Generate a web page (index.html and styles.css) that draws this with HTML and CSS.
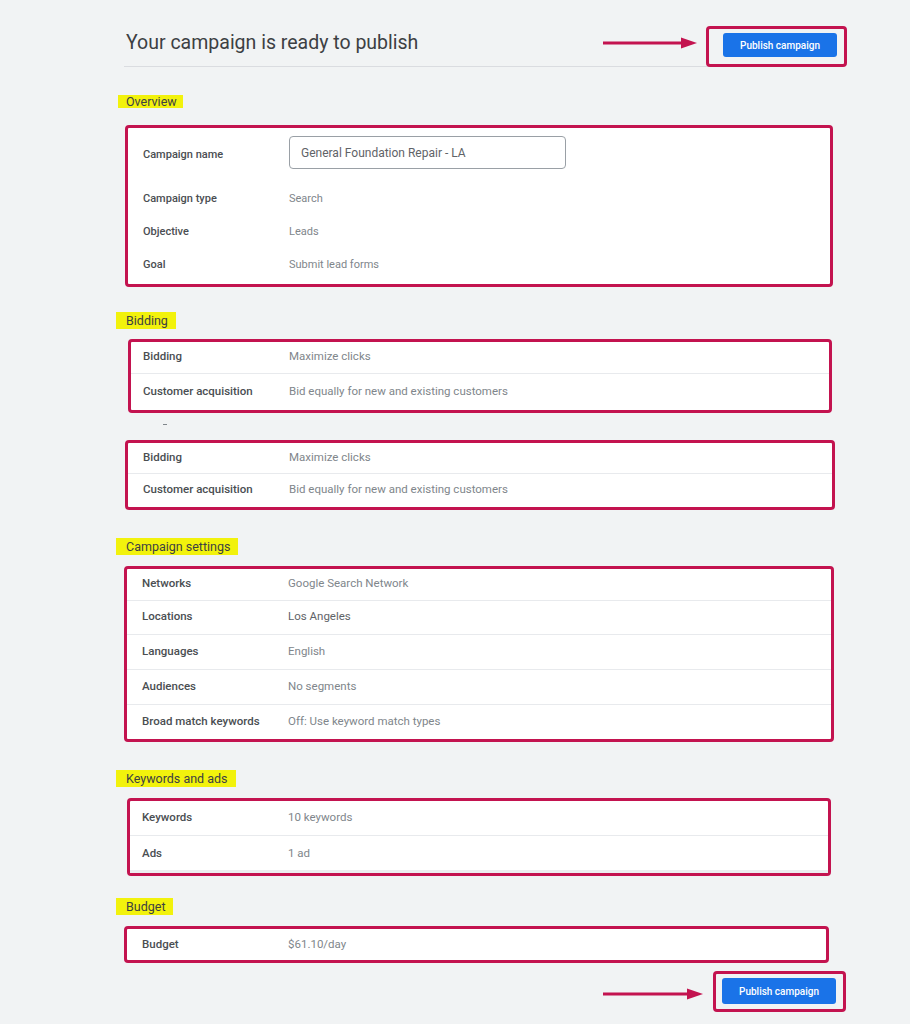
FILE: index.html
```html
<!DOCTYPE html>
<html lang="en">
<head>
<meta charset="utf-8">
<title>Your campaign is ready to publish</title>
<link rel="stylesheet" href="styles.css">
</head>
<body>
<main class="page">
  <header class="header">
    <h1 class="title">Your campaign is ready to publish</h1>
    <div class="callout callout--top">
      <svg class="arrow" width="94" height="12" viewBox="0 0 94 12"><line x1="0" y1="6" x2="82" y2="6" stroke="#c3134f" stroke-width="3"/><polygon points="78,0.5 94,6 78,11.5" fill="#c3134f"/></svg>
      <div class="mark mark--top"><button class="publish">Publish campaign</button></div>
    </div>
  </header>

  <section class="section section--overview">
    <h2 class="heading"><span class="hl hl--small">Overview</span></h2>
    <div class="card card--overview">
      <div class="row row--name">
        <div class="label">Campaign name</div>
        <div class="input">General Foundation Repair - LA</div>
      </div>
      <div class="row row--plain"><div class="label">Campaign type</div><div class="value">Search</div></div>
      <div class="row row--plain"><div class="label">Objective</div><div class="value">Leads</div></div>
      <div class="row row--plain"><div class="label">Goal</div><div class="value">Submit lead forms</div></div>
    </div>
  </section>

  <section class="section section--bidding">
    <h2 class="heading"><span class="hl">Bidding</span></h2>
    <div class="card card--bid1">
      <div class="row row--line row--first"><div class="label">Bidding</div><div class="value">Maximize clicks</div></div>
      <div class="row row--second"><div class="label">Customer acquisition</div><div class="value">Bid equally for new and existing customers</div></div>
    </div>
    <div class="dash"></div>
    <div class="card card--bid2">
      <div class="row row--line row--first"><div class="label">Bidding</div><div class="value">Maximize clicks</div></div>
      <div class="row row--second"><div class="label">Customer acquisition</div><div class="value">Bid equally for new and existing customers</div></div>
    </div>
  </section>

  <section class="section section--settings">
    <h2 class="heading"><span class="hl">Campaign settings</span></h2>
    <div class="card card--settings">
      <div class="row row--line row--first"><div class="label">Networks</div><div class="value">Google Search Network</div></div>
      <div class="row row--line"><div class="label">Locations</div><div class="value value--dark">Los Angeles</div></div>
      <div class="row row--line row--wide"><div class="label">Languages</div><div class="value">English</div></div>
      <div class="row row--line row--wide"><div class="label">Audiences</div><div class="value">No segments</div></div>
      <div class="row"><div class="label">Broad match keywords</div><div class="value">Off: Use keyword match types</div></div>
    </div>
  </section>

  <section class="section section--keywords">
    <h2 class="heading"><span class="hl">Keywords and ads</span></h2>
    <div class="card card--keywords">
      <div class="row row--line row--tall"><div class="label">Keywords</div><div class="value">10 keywords</div></div>
      <div class="row row--tall row--last"><div class="label">Ads</div><div class="value">1 ad</div></div>
    </div>
  </section>

  <section class="section section--budget">
    <h2 class="heading"><span class="hl">Budget</span></h2>
    <div class="card card--budget">
      <div class="row row--budget"><div class="label">Budget</div><div class="value">$61.10/day</div></div>
    </div>
  </section>

  <footer class="footer">
    <svg class="arrow arrow--bottom" width="100" height="12" viewBox="0 0 100 12"><line x1="0" y1="6" x2="88" y2="6" stroke="#c3134f" stroke-width="3"/><polygon points="84,0.5 100,6 84,11.5" fill="#c3134f"/></svg>
    <div class="mark mark--bottom"><button class="publish publish--bottom">Publish campaign</button></div>
  </footer>
</main>
</body>
</html>
```
FILE: styles.css
```css
* { box-sizing: border-box; }
html, body { margin: 0; padding: 0; }
body {
  background: #f1f3f4;
  font-family: Roboto, "Liberation Sans", Arial, sans-serif;
  color: #3c4043;
}
.page {
  margin-left: 124px;
  width: 711px;
}
.header {
  display: flex;
  align-items: flex-start;
  padding-top: 26px;
  border-bottom: 1px solid #dadce0;
  height: 67px;
}
.title {
  flex: 1;
  margin: 0;
  padding: 6px 0 0 2px;
  font-size: 19.5px;
  line-height: 22px;
  font-weight: 400;
  color: #3c4043;
}
.callout {
  display: flex;
  align-items: flex-start;
  margin-right: -12px;
}
.arrow { display: block; }
.callout--top .arrow { margin-top: 11px; margin-right: 9px; }
.mark {
  border: 3px solid #c3134f;
  border-radius: 4px;
}
.mark--top { padding: 4px 7px 7px 14px; height: 41px; }
.publish {
  display: block;
  width: 114px;
  height: 24px;
  border: 0;
  border-radius: 3px;
  background: #1a73e8;
  color: #fff;
  font-family: Roboto, "Liberation Sans", Arial, sans-serif;
  font-size: 10px;
  font-weight: 500;
  padding: 0;
  cursor: pointer;
}
.publish--bottom { height: 26px; }

.heading {
  margin: 0;
  font-size: 12.5px;
  font-weight: 400;
  line-height: 17px;
  height: 17px;
}
.hl {
  display: inline-block;
  background: #f2f20c;
  margin-left: -8px;
  padding: 0 8px 0 10px;
  color: #3c4043;
}
.hl--small { line-height: 13px; margin-left: -6px; padding: 0 6px 0 8px; }

.section--overview { padding-top: 26px; }
.section--bidding { padding-top: 25px; }
.section--settings { padding-top: 28px; }
.section--keywords { padding-top: 28px; }
.section--budget { padding-top: 22px; }
.section .heading { margin-bottom: 11px; }
.section--bidding .heading { margin-bottom: 10px; }
.section--overview .heading { height: 13px; margin-bottom: 19px; }

.card {
  background: #fff;
  border: 3px solid #c3134f;
  border-radius: 4px;
}
.card--overview { margin: 0 2px 0 1px; padding: 8px 0 3px; }
.card--bid1 { margin: 0 3px 0 4px; }
.card--bid2 { margin: 0 0 0 1px; }
.card--settings { margin: 0 1px 0 0; }
.card--keywords { margin: 0 4px 0 3px; }
.card--budget { margin: 0 6px 0 0; }

.row {
  display: flex;
  align-items: center;
  height: 34px;
  padding-left: 15px;
  padding-bottom: 3px;
  font-size: 11.5px;
}
.card--overview .row { padding-bottom: 0; }
.card--bid1 .row { padding-left: 12px; }
.card--keywords .row { padding-left: 12px; }
.row--line { border-bottom: 1px solid #e8eaed; }
.card--bid1 .row--first { height: 32px; }
.card--bid1 .row--second { height: 36px; }
.card--bid2 .row--first { height: 31px; }
.card--bid2 .row--second { height: 33px; }
.card--settings .row--first { height: 32px; }
.row--wide { height: 35px; }
.row--tall { height: 35px; }
.row--last { height: 37px; border-bottom: 3px solid #eceef0; padding-bottom: 1px; }
.row--budget { height: 31px; padding-bottom: 2px; }
.row--name { height: 46px; align-items: flex-start; }
.row--name .label { padding-top: 12px; }
.row--plain { height: 33px; }
.label {
  width: 146px;
  flex: none;
  font-weight: 500;
  color: #4a4e52;
}
.card--overview .row { font-size: 11px; }
.value { color: #80868b; }
.value--dark { color: #5f6368; }
.input {
  width: 277px;
  height: 33px;
  border: 1px solid #9aa0a6;
  border-radius: 4px;
  padding-left: 11px;
  display: flex;
  align-items: center;
  color: #5f6368;
  font-size: 12px;
}
.dash {
  width: 4px;
  height: 1px;
  background: #80868b;
  margin: 11px 0 15px 39px;
}
.footer {
  display: flex;
  justify-content: flex-end;
  align-items: flex-start;
  margin-top: 8px;
  margin-right: -11px;
}
.arrow--bottom { margin-top: 17px; margin-right: 10px; }
.mark--bottom { padding: 4px 7px 5px 6px; height: 41px; }
```
